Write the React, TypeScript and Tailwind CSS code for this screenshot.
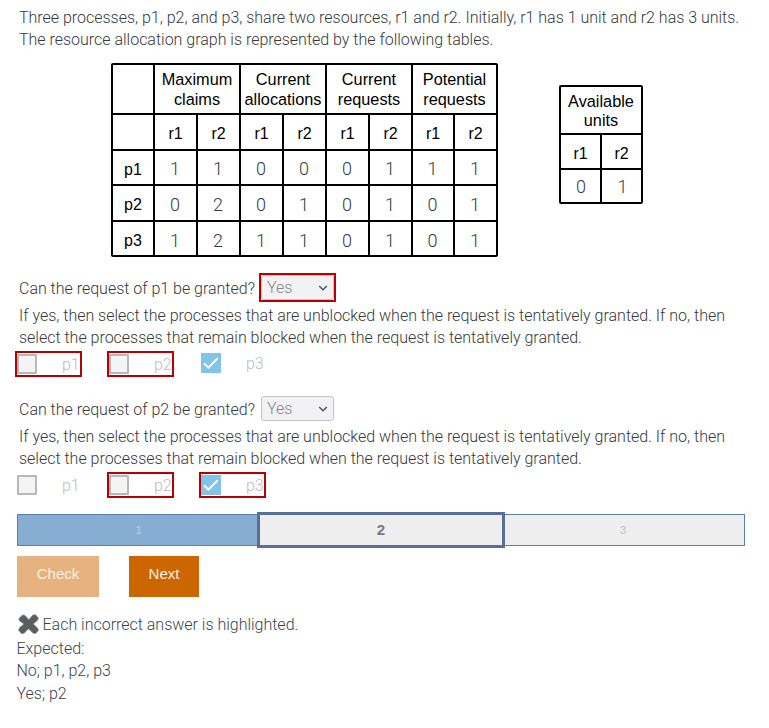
import React from "react";

const groups = [
  ["Maximum", "claims"],
  ["Current", "allocations"],
  ["Current", "requests"],
  ["Potential", "requests"],
];

const rows: [string, number[]][] = [
  ["p1", [1, 1, 0, 0, 0, 1, 1, 1]],
  ["p2", [0, 2, 0, 1, 0, 1, 0, 1]],
  ["p3", [1, 2, 1, 1, 0, 1, 0, 1]],
];

function Label({ children }: { children?: React.ReactNode }) {
  return (
    <div className="flex items-center justify-center bg-white pt-1 font-['Liberation_Sans',Arial,sans-serif] text-[16px] font-normal tracking-normal text-black">
      {children}
    </div>
  );
}

function Heading({ lines, wide }: { lines: string[]; wide?: boolean }) {
  return (
    <div
      className={`${wide ? "pt-[4px]" : "pt-[5px]"} col-span-2 flex flex-col items-center bg-white font-['Liberation_Sans',Arial,sans-serif] text-[16.3px] font-normal tracking-normal whitespace-nowrap text-black`}
    >
      {lines.map((l) => (
        <div key={l} className={wide ? "leading-[20px]" : "leading-[19px]"}>
          {l}
        </div>
      ))}
    </div>
  );
}

function Value({ children, className = "pt-[2px] pr-px" }: { children: React.ReactNode; className?: string }) {
  return (
    <div className={`flex items-center justify-center bg-white text-[18px] tracking-normal ${className}`}>{children}</div>
  );
}

function Choice({
  label,
  checked,
  wrong,
  raised,
}: {
  label: string;
  checked?: boolean;
  wrong?: boolean;
  raised?: boolean;
}) {
  return (
    <div
      className={`flex h-[26px] w-[67px] items-center border-2 ${wrong ? "border-[#b80000]" : "border-transparent"} ${raised ? "-mt-px" : ""}`}
    >
      {checked ? (
        <div className="flex h-5 w-5 shrink-0 items-center justify-center bg-[#80c4e9]">
          <svg width="20" height="20" viewBox="0 0 20 20" fill="none" stroke="white" strokeWidth="2">
            <path d="M3 10.2l4.4 4.4L16.7 5.3" />
          </svg>
        </div>
      ) : (
        <div className="h-5 w-5 shrink-0 rounded-[1px] border-2 border-[#b8b8b8] bg-[#f4f4f4]" />
      )}
      <span className="pt-[2px] pl-[25px] text-[#bdbdbd]">{label}</span>
    </div>
  );
}

function Question({ name, wrongSelect, choices }: { name: string; wrongSelect?: boolean; choices: React.ReactNode }) {
  return (
    <div>
      <div className="flex h-[29px] items-center pl-[19px]">
        <span className="w-[240px] pt-[2px] whitespace-nowrap">Can the request of {name} be granted?</span>
        <div className={`border-2 ${wrongSelect ? "border-[#b80000]" : "border-transparent"}`}>
          <div className="flex h-[25px] w-[73px] items-center justify-between rounded-[3px] border border-[#c4c4c8] bg-[#f2f2f5] pr-[5px] pl-[5px] text-[#858585]">
            <span>Yes</span>
            <svg width="10" height="8" viewBox="0 0 10 8" fill="none" stroke="#555" strokeWidth="1.5">
              <path d="M1.2 2L5 5.8L8.8 2" />
            </svg>
          </div>
        </div>
      </div>
      <p className="mt-[3px] pl-[19px] leading-[22px] whitespace-nowrap">
        If yes, then select the processes that are unblocked when the request is tentatively granted. If no, then
        <br />
        select the processes that remain blocked when the request is tentatively granted.
      </p>
      <div className="mt-[2px] flex gap-[25px] pl-[15px]">{choices}</div>
    </div>
  );
}

export default function App() {
  return (
    <div className="h-[728px] w-[769px] overflow-hidden bg-white pt-[7px] font-[Roboto,sans-serif] text-[16px] font-light tracking-[-0.01px] text-[#37393b]">
      <p className="pl-[19px] leading-[22px] whitespace-nowrap">
        Three processes, p1, p2, and p3, share two resources, r1 and r2. Initially, r1 has 1 unit and r2 has 3 units.
        <br />
        The resource allocation graph is represented by the following tables.
      </p>

      <div className="mt-[12px] flex h-[194px] items-start gap-[61px] pl-[111px]">
        <div className="grid grid-cols-[40px_41px_41px_41px_41px_41px_41px_40px_41px] grid-rows-[48px_34px_33px_34px_33px] gap-[2px] rounded-[2px] bg-black p-[2px]">
          <Label />
          {groups.map((g, i) => (
            <Heading key={i} lines={g} wide />
          ))}
          <Label />
          {groups.map((_, i) => (
            <React.Fragment key={i}>
              <Label>r1</Label>
              <Label>r2</Label>
            </React.Fragment>
          ))}
          {rows.map(([name, values]) => (
            <React.Fragment key={name}>
              <Label>{name}</Label>
              {values.map((v, i) => (
                <Value key={i} className={name === "p3" ? "pt-[4px] pr-px" : "pt-[2px] pr-px"}>
                  {v}
                </Value>
              ))}
            </React.Fragment>
          ))}
        </div>
        <div className="mt-[22px] grid grid-cols-[39px_39px] grid-rows-[46px_33px_32px] gap-[2px] rounded-[2px] bg-black p-[2px]">
          <Heading lines={["Available", "units"]} />
          <Label>r1</Label>
          <Label>r2</Label>
          <Value className="pl-px">0</Value>
          <Value className="pl-[2px]">1</Value>
        </div>
      </div>

      <div className="mt-[16px]">
        <Question
          name="p1"
          wrongSelect
          choices={
            <>
              <Choice label="p1" wrong />
              <Choice label="p2" wrong />
              <Choice label="p3" checked raised />
            </>
          }
        />
      </div>
      <div className="mt-[17px]">
        <Question
          name="p2"
          choices={
            <>
              <Choice label="p1" />
              <Choice label="p2" wrong />
              <Choice label="p3" checked wrong />
            </>
          }
        />
      </div>

      <div className="mt-[14px] flex h-[36px] items-center pl-[17px] font-['Liberation_Sans',Arial,sans-serif] text-[11px] font-normal">
        <div className="flex h-8 w-[240px] items-center justify-center border border-r-0 border-[#5683ad] bg-[#88add3] text-[#b9cde0]">
          <span className="pl-[2px]">1</span>
        </div>
        <div className="flex h-9 w-[248px] items-center justify-center border-3 border-[#586f96] bg-[#eeeeee] text-[15px] font-bold text-[#777b80]">
          2
        </div>
        <div className="flex h-8 w-[240px] items-center justify-center border border-l-0 border-[#5683ad] bg-[#eeeeee] text-[#bfc2c7]">
          <span className="pr-[3px]">3</span>
        </div>
      </div>

      <div className="mt-[8px] flex gap-[30px] pl-[17px] font-['Liberation_Sans',Arial,sans-serif] text-[15px] font-normal">
        <div className="flex h-[41px] w-[82px] items-center justify-center bg-[#e6b280] pb-[5px] text-[#faf0e6]">Check</div>
        <div className="flex h-[41px] w-[70px] items-center justify-center bg-[#cc6600] pb-[5px] text-[#fff0e2]">Next</div>
      </div>

      <div className="mt-[15px] pl-[16.5px] text-[#37474f]">
        <div className="flex h-[24px] items-center">
          <svg width="21" height="20" viewBox="0 0 21 20" className="ml-[1px] shrink-0">
            <path
              d="M1 4.5L4.5 1L7 1.5L10.8 5.8L15 1L17.5 .8L20.3 4L19.5 6.2L15.2 10L20 14.5L20.2 16.5L17.5 19.5L15 19L10.5 14.8L6 19.2L3.5 19.5L.7 16.3L1.3 14L6 10L1.2 6.5Z"
              fill="#5b5e61"
              stroke="#777b7e"
              strokeWidth=".8"
            />
          </svg>
          <span className="pt-px pl-[4px]">Each incorrect answer is highlighted.</span>
        </div>
        <div className="mt-[2px] leading-[22px]">
          <div>Expected:</div>
          <div>No; p1, p2, p3</div>
          <div className="mt-px">Yes; p2</div>
        </div>
      </div>
    </div>
  );
}
